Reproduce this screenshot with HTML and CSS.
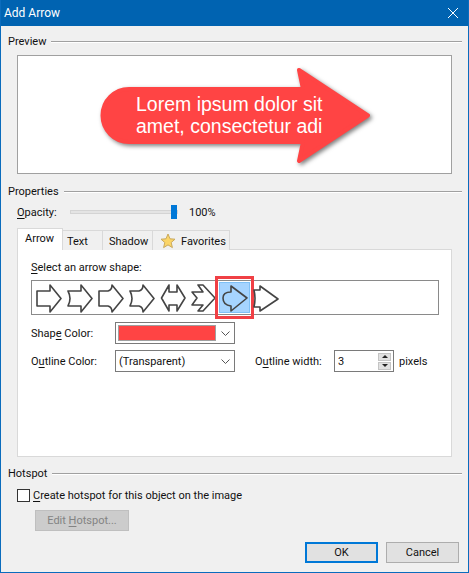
FILE: index.html
```html
<!DOCTYPE html>
<html lang="en">
<head>
    <meta charset="UTF-8"/>
    <title>Add Arrow</title>
    <link rel="stylesheet" href="styles.css">
</head>
<body>

<div class="dialog">
    <div class="title-bar">
        <span>Add Arrow</span>
        <svg class="close-icon" viewBox="0 0 10 10" aria-hidden="true">
            <path d="M0 0 L10 10 M10 0 L0 10"/>
        </svg>
    </div>

    <div class="dialog-body">
        <!-- Preview -->
        <div class="group-head"><span>Preview</span><i></i></div>
        <div class="preview-box">
            <div class="big-arrow">
                <svg viewBox="0 0 280 106" aria-hidden="true">
                    <path d="M29 22 H203 L199 3 L268 48.5 L199 94 L203 75 H29 A26.5 26.5 0 0 1 29 22 Z"/>
                </svg>
                <div class="big-arrow-text">Lorem ipsum dolor sit<br>amet, consectetur adi</div>
            </div>
        </div>

        <!-- Properties -->
        <div class="group-head group-properties"><span>Properties</span><i></i></div>
        <div class="opacity-row">
            <label class="opacity-label"><u>O</u>pacity:</label>
            <div class="slider"><div class="slider-track"></div><div class="slider-thumb"></div></div>
            <span>100%</span>
        </div>

        <div class="tabs">
            <div class="tab tab-active">Arrow</div>
            <div class="tab tab-text">Text</div>
            <div class="tab tab-shadow">Shadow</div>
            <div class="tab tab-favorites">
                <svg class="star" viewBox="0 0 16 16" aria-hidden="true">
                    <path d="M8 1 L10 5.8 L15 6.2 L11.2 9.5 L12.4 14.6 L8 11.9 L3.6 14.6 L4.8 9.5 L1 6.2 L6 5.8 Z"/>
                </svg>
                Favorites
            </div>
        </div>
        <div class="tab-panel">
            <div class="shape-label"><u>S</u>elect an arrow shape:</div>
            <div class="shape-list">
                <div class="shape"><svg viewBox="0 0 31 31"><path d="M4 9 H17 V3 L28 16.5 L17 30 V24 H4 Z"/></svg></div>
                <div class="shape"><svg viewBox="0 0 31 31"><path d="M4 9 H17 V3 L28 16.5 L17 30 V24 H4 Q8 16.5 4 9 Z"/></svg></div>
                <div class="shape"><svg viewBox="0 0 31 31"><path d="M4 9 H13 Q17 8 17 3 L28 16.5 L17 30 Q17 25 13 24 H4 Z"/></svg></div>
                <div class="shape"><svg viewBox="0 0 31 31"><path d="M4 9 H13 Q17 8 17 3 L28 16.5 L17 30 Q17 25 13 24 H4 Q8 16.5 4 9 Z"/></svg></div>
                <div class="shape"><svg viewBox="0 0 31 31"><path d="M4.5 16 L12 3 V10 H20 V3 L28 16 L20 29 V23 H12 V29 Z"/></svg></div>
                <div class="shape"><svg viewBox="0 0 31 31"><path d="M4 10 H15 L10 3 H15 L27 16 L15 29 H10 L15 23 H4 L9 16 Z"/></svg></div>
                <div class="shape shape-selected"><svg viewBox="0 0 31 31"><path d="M12 4 L28 16 L12 29 V24 Q4 23 4 16 Q4 10 12 10 Z"/></svg></div>
                <div class="shape"><svg viewBox="0 0 31 31"><path d="M4 8 H10 V4 L28 17 L10 29 V25 H4 Q6 16.5 4 8 Z"/></svg></div>
            </div>

            <div class="form-row row-shape">
                <label class="form-label">Shap<u>e</u> Color:</label>
                <div class="select">
                    <div class="swatch"></div>
                    <svg class="chevron" viewBox="0 0 9 5" aria-hidden="true"><path d="M0.5 0.5 L4.5 4.5 L8.5 0.5"/></svg>
                </div>
            </div>
            <div class="form-row row-outline">
                <label class="form-label">O<u>u</u>tline Color:</label>
                <div class="select">
                    <span class="select-value">(Transparent)</span>
                    <svg class="chevron" viewBox="0 0 9 5" aria-hidden="true"><path d="M0.5 0.5 L4.5 4.5 L8.5 0.5"/></svg>
                </div>
                <label class="width-label">O<u>u</u>tline width:</label>
                <div class="spinner">
                    <span class="spinner-value">3</span>
                    <div class="spinner-buttons">
                        <div class="spin-btn"><i class="tri-up"></i></div>
                        <div class="spin-btn"><i class="tri-down"></i></div>
                    </div>
                </div>
                <span class="pixels">pixels</span>
            </div>
        </div>

        <!-- Hotspot -->
        <div class="group-head group-hotspot"><span>Hotspot</span><i></i></div>
        <div class="check-row">
            <span class="check-box"></span>
            <label><u>C</u>reate hotspot for this object on the image</label>
        </div>
        <button class="btn btn-edit" disabled>Edit <u>H</u>otspot...</button>

        <div class="footer">
            <button class="btn btn-ok">OK</button>
            <button class="btn btn-cancel">Cancel</button>
        </div>
    </div>
</div>

</body>
</html>
```

FILE: styles.css
```css
* {
  box-sizing: border-box;
}
html, body {
  margin: 0;
  padding: 0;
}
body {
  font-family: Roboto, sans-serif;
  font-size: 11px;
  color: #111;
  width: 469px;
  height: 573px;
  overflow: hidden;
}
u {
  text-underline-offset: 2px;
}
.dialog {
  width: 469px;
  height: 573px;
  background: #f0f0f0;
  border: 1px solid #0a6cbd;
  border-top: 0;
}
.title-bar {
  height: 26px;
  background: #0063b1;
  color: #fff;
  font-size: 12px;
  display: flex;
  align-items: center;
  justify-content: space-between;
  padding: 0 10px 0 3px;
}
.close-icon {
  width: 10px;
  height: 10px;
  stroke: #fff;
  fill: none;
  stroke-width: 1;
}
.dialog-body {
  padding: 7px 6px 0 7px;
}

/* Group headings with the line running to the right */
.group-head {
  height: 16px;
  display: flex;
  align-items: center;
  gap: 5px;
}
.group-head i {
  flex: 1;
  height: 2px;
  margin-top: 1px;
  border-top: 1px solid #a0a0a0;
  border-bottom: 1px solid #fff;
}
.group-properties {
  margin-top: 9px;
}
.group-hotspot {
  margin-top: 8px;
}

/* Preview */
.preview-box {
  margin: 6px 0 0 9px;
  width: 435px;
  height: 119px;
  background: #fff;
  border: 1px solid #a0a0a0;
  padding: 11px 0 0 82px;
}
.big-arrow {
  width: 280px;
  height: 106px;
  display: grid;
}
.big-arrow > * {
  grid-area: 1 / 1;
}
.big-arrow svg {
  width: 280px;
  height: 106px;
  overflow: visible;
  fill: #ff4444;
  stroke: #ff4444;
  stroke-width: 4;
  stroke-linejoin: round;
  filter: drop-shadow(2px 2px 2px rgba(0, 0, 0, 0.5));
}
.big-arrow-text {
  position: relative;
  font-family: "Liberation Sans", sans-serif;
  font-size: 19.5px;
  line-height: 22px;
  color: #fff;
  padding: 26px 0 0 36px;
  white-space: nowrap;
}

/* Opacity slider */
.opacity-row {
  height: 16px;
  margin-top: 5px;
  display: flex;
  align-items: center;
}
.opacity-label {
  margin-left: 9px;
  width: 53px;
}
.slider {
  width: 108px;
  height: 16px;
  position: relative;
  margin-right: 11px;
}
.slider-track {
  position: absolute;
  left: 0;
  right: 0;
  top: 6px;
  height: 4px;
  background: #e4e4e4;
  border: 1px solid #d4d4d4;
}
.slider-thumb {
  position: absolute;
  top: 1px;
  right: 1px;
  width: 6px;
  height: 14px;
  background: #0078d7;
}

/* Tabs */
.tabs {
  margin: 8px 0 0 9px;
  height: 22px;
  display: flex;
  align-items: flex-end;
  position: relative;
  z-index: 1;
}
.tab {
  height: 20px;
  border: 1px solid #d9d9d9;
  border-left: 0;
  border-bottom: 0;
  background: #f0f0f0;
  display: flex;
  align-items: center;
  padding-top: 1px;
}
.tab-active {
  width: 46px;
  height: 22px;
  background: #fff;
  border-left: 1px solid #d9d9d9;
  padding: 0 0 2px 7px;
}
.tab-text {
  width: 40px;
  padding-left: 4px;
}
.tab-shadow {
  width: 50px;
  padding-left: 6px;
}
.tab-favorites {
  width: 77px;
  padding-left: 7px;
  gap: 5px;
}
.star {
  width: 16px;
  height: 16px;
  fill: #fbd568;
  stroke: #c9a95e;
  stroke-width: 1;
  stroke-linejoin: round;
}
.tab-panel {
  margin: -1px 0 0 9px;
  width: 435px;
  height: 208px;
  background: #fff;
  border: 1px solid #d9d9d9;
  padding: 10px 0 0 13px;
}
.shape-label {
  height: 16px;
  line-height: 16px;
}

/* Arrow shape picker */
.shape-list {
  margin-top: 4px;
  width: 408px;
  height: 35px;
  border: 1px solid #8a8a8a;
  padding: 1px;
  display: flex;
}
.shape {
  width: 31px;
  height: 31px;
  position: relative;
}
.shape svg {
  display: block;
  width: 31px;
  height: 31px;
  fill: none;
  stroke: #444;
  stroke-width: 1.6;
  stroke-linejoin: round;
}
.shape-selected {
  background: #a6d4ff;
  box-shadow: inset 0 0 0 1px #7fc0f5;
}
.shape-selected::after {
  content: "";
  position: absolute;
  top: -6px;
  bottom: -6px;
  left: -4px;
  right: -4px;
  border: 3px solid #f04045;
}

/* Form rows */
.form-row {
  display: flex;
  align-items: center;
  height: 22px;
}
.row-shape {
  margin-top: 7px;
}
.row-outline {
  margin-top: 6px;
}
.form-label {
  width: 84px;
}
.select {
  width: 120px;
  height: 22px;
  border: 1px solid #7a7a7a;
  background: #fff;
  padding: 2px 4px 2px 2px;
  display: flex;
  align-items: center;
  justify-content: space-between;
}
.swatch {
  width: 98px;
  height: 16px;
  background: #ff4444;
  border: 1px solid #a0a0a0;
}
.select-value {
  padding-left: 1px;
}
.chevron {
  width: 9px;
  height: 5px;
  fill: none;
  stroke: #555;
  stroke-width: 1;
}
.width-label {
  margin-left: 20px;
  width: 79px;
}
.spinner {
  width: 60px;
  height: 22px;
  border: 1px solid #7a7a7a;
  background: #fff;
  display: flex;
  justify-content: space-between;
  align-items: center;
  padding: 0 2px 0 3px;
}
.spinner-buttons {
  display: flex;
  flex-direction: column;
  gap: 1px;
}
.spin-btn {
  width: 13px;
  height: 8px;
  background: #e1e1e1;
  border: 1px solid #c4c4c4;
  display: flex;
  align-items: center;
  justify-content: center;
}
.tri-up, .tri-down {
  width: 0;
  height: 0;
  border-left: 3px solid transparent;
  border-right: 3px solid transparent;
}
.tri-up {
  border-bottom: 3px solid #222;
}
.tri-down {
  border-top: 3px solid #222;
}
.pixels {
  margin-left: 5px;
}

/* Hotspot */
.check-row {
  margin: 7px 0 0 9px;
  height: 14px;
  display: flex;
  align-items: center;
  gap: 3px;
}
.check-box {
  width: 13px;
  height: 13px;
  background: #fff;
  border: 1px solid #333;
}
.btn {
  display: block;
  height: 21px;
  font-family: inherit;
  font-size: 11px;
  color: #111;
  background: #e1e1e1;
  border: 1px solid #adadad;
  padding: 0;
}
.btn-edit {
  margin: 8px 0 0 27px;
  width: 94px;
  background: #ccc;
  border-color: #bfbfbf;
  color: #838383;
}
.footer {
  margin-top: 11px;
  padding-right: 3px;
  display: flex;
  justify-content: flex-end;
  gap: 8px;
}
.btn-ok {
  width: 73px;
  border: 2px solid #0078d7;
}
.btn-cancel {
  width: 73px;
}
```
